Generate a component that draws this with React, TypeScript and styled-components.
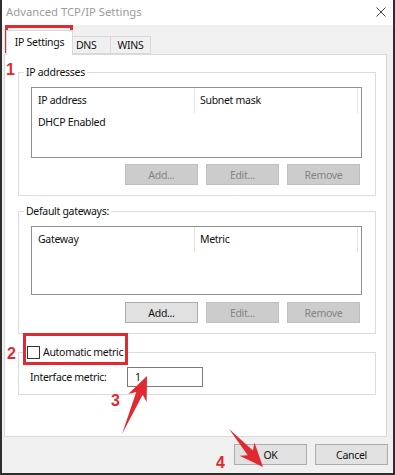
import React, { FC } from 'react';
import styled, { createGlobalStyle } from 'styled-components';

const GlobalStyle = createGlobalStyle`
  html, body {
    margin: 0;
    padding: 0;
    background: #ffffff;
  }
  body {
    font-family: 'Noto Sans', 'Open Sans', sans-serif;
    font-size: 10.5px;
    letter-spacing: -0.3px;
    color: #111111;
  }
`;

const Stage = styled.div`
  position: relative;
  width: 395px;
  height: 475px;
`;

const Window = styled.div`
  width: 395px;
  height: 475px;
  box-sizing: border-box;
  background: #f0f0f0;
  border-left: 2px solid #2e2e2e;
  border-right: 2px solid #2e2e2e;
  border-bottom: 2px solid #2e2e2e;
  display: flex;
  flex-direction: column;
`;

const TitleBar = styled.div`
  height: 23px;
  flex-shrink: 0;
  background: #ffffff;
  display: flex;
  align-items: center;
  justify-content: space-between;
  padding: 0 7px 2px 4px;
  font-size: 11.3px;
  letter-spacing: 0;
  color: #9c9c9c;
`;

const CloseButton = styled.span`
  display: flex;
  color: #444444;
`;

const Body = styled.div`
  flex: 1;
  display: flex;
  flex-direction: column;
  padding-top: 5px;
`;

const TabRow = styled.div`
  display: flex;
  align-items: flex-end;
  height: 24px;
  padding-left: 4px;
  position: relative;
  z-index: 1;
`;

const Tab = styled.div<{ $active?: boolean; $width: number; $textPad?: number }>`
  box-sizing: border-box;
  width: ${(p) => p.$width}px;
  height: ${(p) => (p.$active ? 25 : 18)}px;
  margin-bottom: ${(p) => (p.$active ? -1 : 0)}px;
  margin-left: -1px;
  background: ${(p) => (p.$active ? '#ffffff' : '#f0f0f0')};
  border: 1px solid #d9d9d9;
  border-bottom: ${(p) => (p.$active ? 'none' : '1px solid #d9d9d9')};
  display: flex;
  align-items: center;
  justify-content: ${(p) => (p.$textPad !== undefined ? 'flex-start' : 'center')};
  padding-left: ${(p) => p.$textPad ?? 0}px;
  padding-bottom: ${(p) => (p.$active ? 2 : 0)}px;
  &:first-child {
    margin-left: 0;
  }
`;

const Panel = styled.div`
  flex: 1;
  width: 383px;
  box-sizing: border-box;
  margin-left: 2px;
  background: #ffffff;
  border: 1px solid #d9d9d9;
  padding: 10px 10px 0 13px;
  display: flex;
  flex-direction: column;
`;

const Group = styled.fieldset<{ $gap?: number }>`
  margin: ${(p) => p.$gap ?? 0}px 0 0 0;
  padding: 0;
  border: 1px solid #dcdcdc;
  min-width: 0;
`;

const Legend = styled.legend<{ $indent?: number }>`
  margin-left: ${(p) => p.$indent ?? 5}px;
  padding: 0 2px;
  line-height: 15px;
  height: 15px;
  display: flex;
  align-items: center;
`;

const GroupBody = styled.div<{ $pad: string }>`
  padding: ${(p) => p.$pad};
  display: flex;
  flex-direction: column;
`;

const ListView = styled.div<{ $height: number }>`
  height: ${(p) => p.$height}px;
  box-sizing: border-box;
  border: 1px solid #8f8f8f;
  background: #ffffff;
`;

const HeaderRow = styled.div`
  display: grid;
  grid-template-columns: 163px 163px 1fr;
  height: 25px;
`;

const HeaderCell = styled.div<{ $pad: number }>`
  display: flex;
  align-items: center;
  padding-left: ${(p) => p.$pad}px;
  border-right: 1px solid #e5e5e5;
  padding-bottom: 1px;
`;

const DataRow = styled.div`
  height: 18px;
  display: flex;
  align-items: center;
  padding-left: 6px;
`;

const ButtonRow = styled.div<{ $top: number }>`
  display: flex;
  justify-content: flex-end;
  gap: 8px;
  margin-top: ${(p) => p.$top}px;
  padding-right: 2px;
`;

const Button = styled.div<{ $disabled?: boolean }>`
  width: 73px;
  height: 21px;
  box-sizing: border-box;
  display: flex;
  align-items: center;
  justify-content: center;
  background: ${(p) => (p.$disabled ? '#cccccc' : '#e1e1e1')};
  border: 1px solid ${(p) => (p.$disabled ? '#bfbfbf' : '#adadad')};
  color: ${(p) => (p.$disabled ? '#858585' : '#111111')};
`;

const CheckBox = styled.span`
  width: 13px;
  height: 13px;
  box-sizing: border-box;
  border: 1px solid #333333;
  background: #ffffff;
  margin-right: 3px;
`;

const MetricRow = styled.div`
  display: flex;
  align-items: center;
`;

const MetricLabel = styled.span`
  width: 97px;
`;

const TextInput = styled.div`
  width: 76px;
  height: 20px;
  box-sizing: border-box;
  border: 1px solid #7a7a7a;
  display: flex;
  align-items: center;
  padding-left: 7px;
`;

const Footer = styled.div`
  height: 29px;
  flex-shrink: 0;
  display: flex;
  justify-content: flex-end;
  align-items: flex-start;
  gap: 8px;
  padding: 7px 5px 0 0;
`;

const Overlay = styled.svg`
  position: absolute;
  left: 0;
  top: 0;
  pointer-events: none;
`;

const StepNumber = styled.span<{ $x: number; $y: number }>`
  position: absolute;
  left: ${(p) => p.$x}px;
  top: ${(p) => p.$y}px;
  font-family: 'Liberation Sans', Arial, sans-serif;
  font-weight: bold;
  font-size: 16px;
  line-height: 16px;
  letter-spacing: 0;
  color: #e02a30;
`;

const RED = '#e02a30';

// tapered annotation arrow from tail to tip
const Arrow: FC<{ x1: number; y1: number; x2: number; y2: number }> = ({ x1, y1, x2, y2 }) => {
  const len = Math.hypot(x2 - x1, y2 - y1);
  const angle = (Math.atan2(y2 - y1, x2 - x1) * 180) / Math.PI;
  const points = [
    [0, 0],
    [len - 19, -3.5],
    [len - 24, -10],
    [len, 0],
    [len - 24, 10],
    [len - 19, 3.5],
  ]
    .map((p) => p.join(','))
    .join(' ');
  return (
    <polygon
      points={points}
      fill={RED}
      transform={`translate(${x1} ${y1}) rotate(${angle})`}
    />
  );
};

const Annotations = () => (
  <>
    <Overlay width={395} height={475}>
      <rect x={6.5} y={26.5} width={65} height={25} fill="none" stroke={RED} strokeWidth={3} />
      <rect x={24.5} y={334.5} width={102} height={29} fill="none" stroke={RED} strokeWidth={3} />
      <Arrow x1={122} y1={434} x2={147} y2={376} />
      <Arrow x1={229} y1={429} x2={263} y2={467} />
    </Overlay>
    <StepNumber $x={6} $y={62}>1</StepNumber>
    <StepNumber $x={7} $y={346}>2</StepNumber>
    <StepNumber $x={111} $y={393}>3</StepNumber>
    <StepNumber $x={216} $y={455}>4</StepNumber>
  </>
);

const AddressList: FC<{ height: number; first: string; second: string; rows?: string[] }> = ({
  height,
  first,
  second,
  rows = [],
}) => (
  <ListView $height={height}>
    <HeaderRow>
      <HeaderCell $pad={6}>{first}</HeaderCell>
      <HeaderCell $pad={5}>{second}</HeaderCell>
    </HeaderRow>
    {rows.map((r) => (
      <DataRow key={r}>{r}</DataRow>
    ))}
  </ListView>
);

export default function App() {
  return (
    <Stage>
      <GlobalStyle />
      <Window>
        <TitleBar>
          Advanced TCP/IP Settings
          <CloseButton>
            <svg width="10" height="10" viewBox="0 0 10 10">
              <path d="M0.5 0.5 L9.5 9.5 M9.5 0.5 L0.5 9.5" stroke="currentColor" strokeWidth="1" />
            </svg>
          </CloseButton>
        </TitleBar>
        <Body>
          <TabRow>
            <Tab $active $width={67}>IP Settings</Tab>
            <Tab $width={39} $textPad={3}>DNS</Tab>
            <Tab $width={41}>WINS</Tab>
          </TabRow>
          <Panel>
            <Group>
              <Legend>IP addresses</Legend>
              <GroupBody $pad="7px 13px 10px 12px">
                <AddressList height={71} first="IP address" second="Subnet mask" rows={['DHCP Enabled']} />
                <ButtonRow $top={6}>
                  <Button $disabled>Add...</Button>
                  <Button $disabled>Edit...</Button>
                  <Button $disabled>Remove</Button>
                </ButtonRow>
              </GroupBody>
            </Group>
            <Group $gap={8}>
              <Legend>Default gateways:</Legend>
              <GroupBody $pad="7px 13px 10px 12px">
                <AddressList height={69} first="Gateway" second="Metric" />
                <ButtonRow $top={7}>
                  <Button>Add...</Button>
                  <Button $disabled>Edit...</Button>
                  <Button $disabled>Remove</Button>
                </ButtonRow>
              </GroupBody>
            </Group>
            <Group $gap={11}>
              <Legend $indent={6}>
                <CheckBox />
                Automatic metric
              </Legend>
              <GroupBody $pad="7px 10px 7px 11px">
                <MetricRow>
                  <MetricLabel>Interface metric:</MetricLabel>
                  <TextInput>1</TextInput>
                </MetricRow>
              </GroupBody>
            </Group>
          </Panel>
          <Footer>
            <Button>OK</Button>
            <Button>Cancel</Button>
          </Footer>
        </Body>
      </Window>
      <Annotations />
    </Stage>
  );
}
